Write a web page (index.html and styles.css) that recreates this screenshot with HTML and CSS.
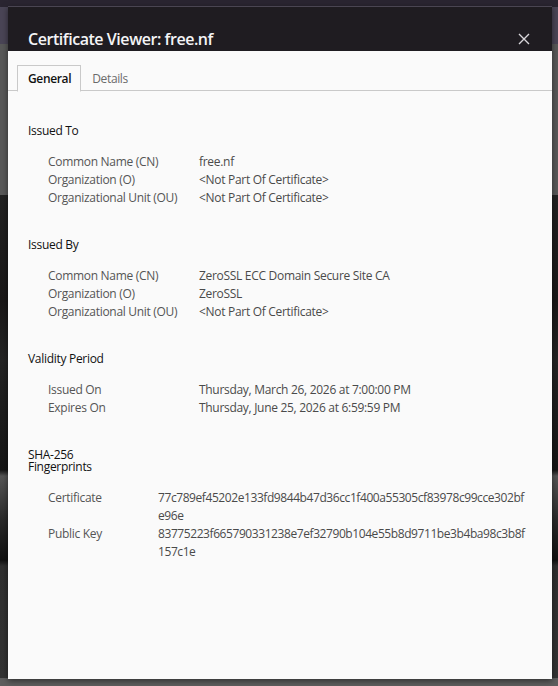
FILE: index.html
```html
<!DOCTYPE html>
<html>
<head>
<meta charset="utf-8">
<link rel="stylesheet" href="styles.css">
</head>
<body>
<div class="dialog">
  <div class="titlebar">
    <div class="title">Certificate Viewer: free.nf</div>
    <svg class="close" width="12" height="12" viewBox="0 0 12 12"><path d="M1 1 L11 11 M11 1 L1 11" stroke="#d8d6da" stroke-width="1.4" fill="none"/></svg>
  </div>
  <div class="content">
    <div class="tabs">
      <div class="tab active">General</div>
      <div class="tab">Details</div>
    </div>
    <div class="sections">
      <section class="sec">
        <h2 class="head">Issued To</h2>
        <div class="rows">
          <div class="lbl">Common Name (CN)</div><div class="val">free.nf</div>
          <div class="lbl">Organization (O)</div><div class="val">&lt;Not Part Of Certificate&gt;</div>
          <div class="lbl">Organizational Unit (OU)</div><div class="val">&lt;Not Part Of Certificate&gt;</div>
        </div>
      </section>
      <section class="sec">
        <h2 class="head">Issued By</h2>
        <div class="rows">
          <div class="lbl">Common Name (CN)</div><div class="val">ZeroSSL ECC Domain Secure Site CA</div>
          <div class="lbl">Organization (O)</div><div class="val">ZeroSSL</div>
          <div class="lbl">Organizational Unit (OU)</div><div class="val">&lt;Not Part Of Certificate&gt;</div>
        </div>
      </section>
      <section class="sec">
        <h2 class="head">Validity Period</h2>
        <div class="rows">
          <div class="lbl">Issued On</div><div class="val">Thursday, March 26, 2026 at 7:00:00 PM</div>
          <div class="lbl">Expires On</div><div class="val">Thursday, June 25, 2026 at 6:59:59 PM</div>
        </div>
      </section>
      <section class="sec fpsec">
        <h2 class="head narrow">SHA-256 Fingerprints</h2>
        <div class="rows fp">
          <div class="lbl">Certificate</div><div class="val hash">77c789ef45202e133fd9844b47d36cc1f400a55305cf83978c99cce302bfe96e</div>
          <div class="lbl">Public Key</div><div class="val hash">83775223f665790331238e7ef32790b104e55b8d9711be3b4ba98c3b8f157c1e</div>
        </div>
      </section>
    </div>
  </div>
</div>
</body>
</html>
```
FILE: styles.css
```css
html, body {
  margin: 0;
  padding: 0;
}
body {
  width: 558px;
  height: 686px;
  overflow: hidden;
  padding: 6px 0 0 8px;
  box-sizing: border-box;
  font-family: "Open Sans", "Noto Sans", sans-serif;
  background:
    linear-gradient(to bottom,
      #2a2531 0, #2a2531 7px,
      #4a4556 7px, #4a4556 44px,
      #585858 44px, #585858 195px,
      #222 195px, #1a1818 300px, #242424 360px, #151515 470px,
      #555 476px, #2a2a2a 520px, #111 560px,
      #303030 566px, #333 678px,
      #5e5e5e 678px, #5e5e5e 686px);
}
.dialog {
  width: 544px;
  height: 672px;
  display: flex;
  flex-direction: column;
  box-shadow: 0 2px 6px rgba(0,0,0,0.5);
  border-top: 1px solid #4a4552;
}
.titlebar {
  height: 44px;
  background: #1f1c21;
  display: flex;
  align-items: flex-end;
  justify-content: space-between;
  padding: 0 22px 0 20px;
  box-sizing: border-box;
}
.title {
  color: #f4f4f6;
  font-size: 16px;
  font-weight: 600;
  letter-spacing: -0.45px;
  line-height: 24px;
}
.close {
  margin-bottom: 6px;
}
.content {
  flex: 1;
  background: #fafafa;
  display: flex;
  flex-direction: column;
}
.tabs {
  display: flex;
  margin-top: 14px;
  padding-left: 9px;
  border-bottom: 1px solid #c9c9c9;
  height: 25px;
}
.tab {
  font-size: 12px;
  color: #6a6a6a;
  padding: 0 11px;
  line-height: 27px;
  height: 25px;
  letter-spacing: -0.35px;
}
.tab.active {
  color: #111;
  font-weight: 600;
  border: 1px solid #c9c9c9;
  border-bottom: 1px solid #fafafa;
  background: #fafafa;
  height: 25px;
  line-height: 26px;
  padding: 0 9px 0 10px;
}
.sections {
  padding: 32px 20px 0 20px;
  display: flex;
  flex-direction: column;
  gap: 30px;
}
.fpsec {
  margin-top: 2px;
}
.head {
  margin: 0;
  font-size: 12px;
  font-weight: 400;
  color: #111;
  line-height: 16px;
  letter-spacing: -0.3px;
}
.head.narrow {
  width: 80px;
  line-height: 12px;
}
.rows {
  display: grid;
  grid-template-columns: 151px 1fr;
  padding-left: 20px;
  margin-top: 14px;
  font-size: 12px;
  line-height: 18px;
  color: #555;
  letter-spacing: -0.3px;
}
.rows.fp {
  grid-template-columns: 110px 370px;
  margin-top: 16px;
}
.val {
  color: #4a4a4a;
}
.hash {
  word-break: break-all;
  letter-spacing: -0.42px;
}
```
